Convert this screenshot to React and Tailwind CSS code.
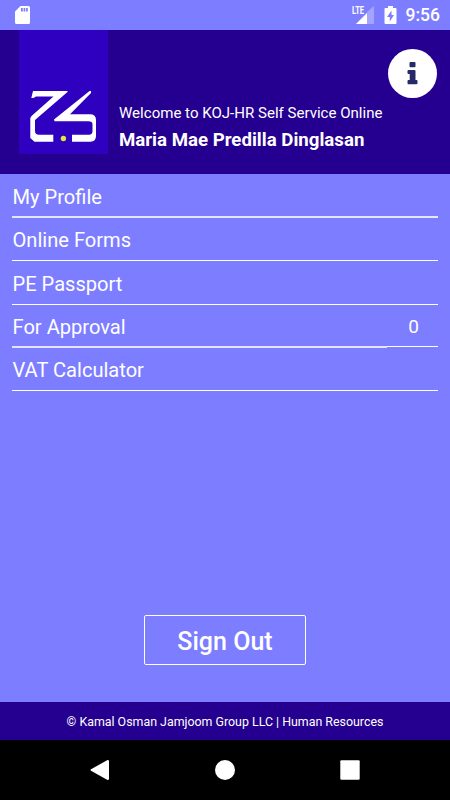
import React from "react";

const menuItems = [
  { label: "My Profile", row: "h-[42px] pt-[9px]", line: "h-[2px] opacity-80" },
  { label: "Online Forms", row: "h-[42px] pt-[8px]", line: "h-[1px]" },
  { label: "PE Passport", row: "h-[43px] pt-[9px]", line: "h-[1px]" },
  { label: "For Approval", row: "h-[41px] pt-[8px]", line: "h-[2px] opacity-80", count: 0 },
  { label: "VAT Calculator", row: "h-[42px] pt-[8px]", line: "h-[1px]" },
];

const StatusBar = () => (
  <div className="h-[30px] flex items-center pl-[15px] pr-[10px] text-white">
    <svg width="15" height="18" viewBox="0 0 15 18">
      <path
        fill="currentColor"
        fillRule="evenodd"
        d="M5.5 0H13.5Q15 0 15 1.5V16.5Q15 18 13.5 18H1.5Q0 18 0 16.5V5.5ZM6 2V5.5H7.8V2ZM8.6 2V5.5H10.3V2ZM11.1 2V5.5H12.8V2Z"
      />
    </svg>
    <div className="ml-auto flex items-center">
      <svg width="23" height="20" viewBox="0 0 23 20">
        <path fill="#fff" fillOpacity="0.3" d="M23 1V19H5L16 8V7Z" />
        <path fill="#fff" d="M16 8V19H5Z" />
        <text
          x="1"
          y="9"
          fill="#fff"
          fontSize="11"
          fontWeight="700"
          textLength="12"
          lengthAdjust="spacingAndGlyphs"
          fontFamily="Roboto, sans-serif"
        >
          LTE
        </text>
      </svg>
      <svg className="ml-[10px]" width="13" height="18" viewBox="0 0 13 18">
        <path
          fill="currentColor"
          fillRule="evenodd"
          d="M4 0H9V2H11.5Q12.5 2 12.5 3V17Q12.5 18 11.5 18H1.5Q.5 18 .5 17V3Q.5 2 1.5 2H4ZM7.5 4.5L3 11H5.8V15.5L10 9H7.5Z"
        />
      </svg>
      <span className="ml-[9px] text-[17.5px] leading-[30px] font-medium">9:56</span>
    </div>
  </div>
);

const Logo = () => (
  <svg width="89" height="124" viewBox="0 0 89 124">
    <rect width="89" height="124" fill="#2f00c0" />
    <path
      fill="#fff"
      d="M14 61H48.500V62L16 90V101Q16 104.800 20 104.800H34.300V111.700H15.500L11.300 108V88L12.500 86L34.500 66.500H17L14.500 68H12.300Z"
    />
    <path
      fill="#fff"
      d="M70.500 61H72V63L51 84.300H71Q77 84.300 77 90V106Q77 111.700 71.500 111.700H53V104.800H70Q73.500 104.800 73.500 101V94.500Q73.500 91.300 69.500 91.300H35.500L35 89.500Z"
    />
    <circle cx="44.400" cy="108.500" r="2.700" fill="#e1e83c" />
  </svg>
);

const Header = () => (
  <header className="h-[144px] bg-[#250090] flex pl-[19px] pr-[13px] text-white relative">
    <Logo />
    <div className="ml-[11px] pt-[73px] whitespace-nowrap">
      <p className="text-[15.05px] leading-[20px]">Welcome to KOJ-HR Self Service Online</p>
      <h1 className="mt-[6px] text-[18.65px] leading-[22px] font-bold">Maria Mae Predilla Dinglasan</h1>
    </div>
    <button className="absolute right-[13px] top-[19px] w-[49px] h-[49px] rounded-full bg-white flex items-center justify-center">
      <svg width="12" height="23" viewBox="0 0 12 23">
        <path
          fill="#262b68"
          d="M3.500 0H7.500Q8.500 0 8.500 1V4.300Q8.500 5.300 7.500 5.300H3.500Q2.500 5.300 2.500 4.300V1Q2.500 0 3.500 0ZM1.500 8H7.500Q8.500 8 8.500 9V18H9.500Q10.500 18 10.500 19V21.300Q10.500 22.300 9.500 22.300H1.500Q.5 22.300 .5 21.300V19Q.5 18 1.500 18H2.700V12H1.500Q.5 12 .5 11V9Q.5 8 1.500 8Z"
        />
      </svg>
    </button>
  </header>
);

const MenuList = () => (
  <nav className="px-[12px] text-white">
    {menuItems.map((item) => (
      <div key={item.label}>
        <div className={`flex justify-between text-[20.1px] leading-[28px] ${item.row}`}>
          <span className="pl-[0.5px]">{item.label}</span>
          {item.count !== undefined && <span className="pr-[19px] text-[19px]">{item.count}</span>}
        </div>
        <div className="flex items-start">
          <div className={`grow bg-white ${item.line}`} />
          {item.count !== undefined && <div className="w-[51px] h-[1px] bg-white" />}
        </div>
      </div>
    ))}
  </nav>
);

const NavigationBar = () => (
  <div className="h-[60px] bg-black flex items-center justify-between px-[90px]">
    <svg width="20" height="20" viewBox="0 0 20 20">
      <path fill="#fff" d="M1 9.300L17.500 0Q19 0 19 1V19Q19 20 17.500 20L1 10.700Q0 10 1 9.300Z" />
    </svg>
    <svg width="20" height="20" viewBox="0 0 20 20">
      <circle cx="10" cy="10" r="10" fill="#fff" />
    </svg>
    <svg width="20" height="20" viewBox="0 0 20 20">
      <rect x=".3" y=".3" width="19.400" height="19.400" rx="1" fill="#fff" />
    </svg>
  </div>
);

const App = () => {
  return (
    <div className="w-[450px] h-[800px] bg-[#7d7dff] flex flex-col overflow-hidden font-['Roboto',sans-serif]">
      <StatusBar />
      <Header />
      <MenuList />
      <div className="mt-auto mb-[37px] flex justify-center">
        <button className="w-[162px] h-[50px] pt-[3px] border border-white rounded-[2px] text-white text-[25px] font-medium">
          Sign Out
        </button>
      </div>
      <footer className="h-[38px] pt-[1px] bg-[#250090] text-white text-[12.4px] leading-[37px] text-center">
        © Kamal Osman Jamjoom Group LLC | Human Resources
      </footer>
      <NavigationBar />
    </div>
  );
};

export default App;
